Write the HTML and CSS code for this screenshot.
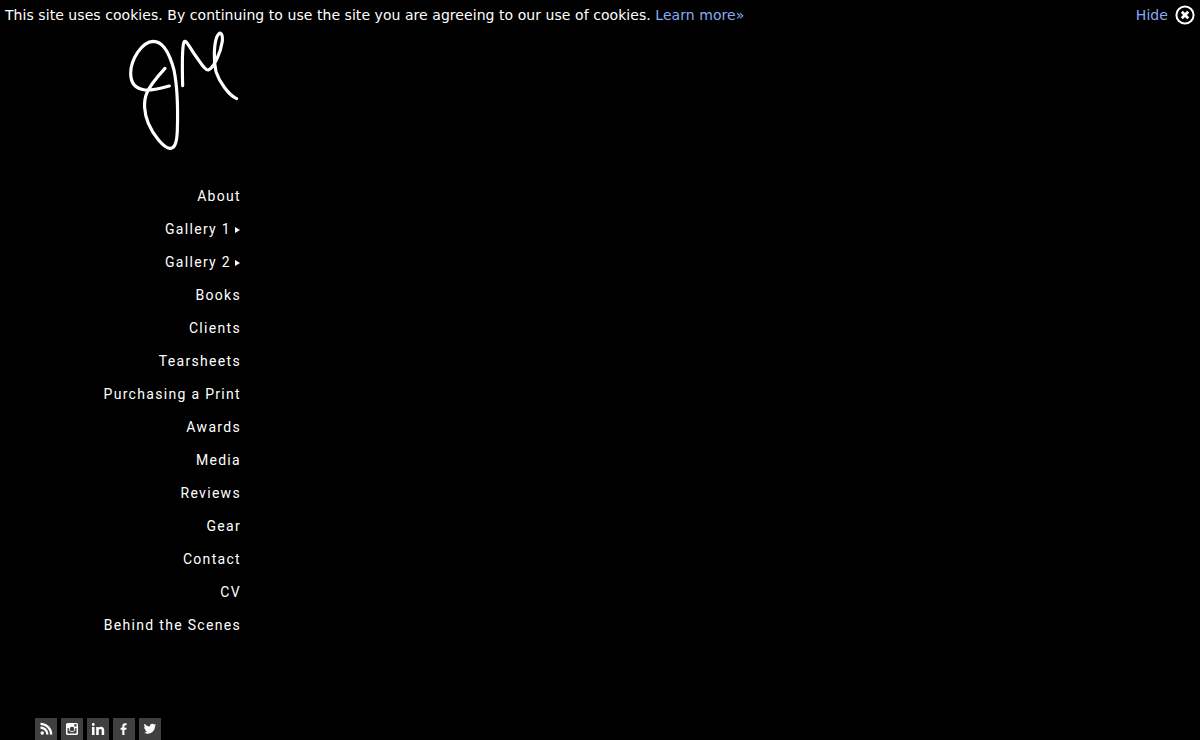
FILE: index.html
```html
<!DOCTYPE html>
<html>
<head>
<meta charset="UTF-8">
<title>Portfolio</title>
<link rel="stylesheet" href="styles.css">
</head>
<body>

<div class="cookieBar">
	<span>This site uses cookies. By continuing to use the site you are agreeing to our use of cookies. <a href="#">Learn more»</a></span>
	<span class="cookieHide">
		<a href="#">Hide</a>
		<svg class="closeIcon" viewBox="0 0 20 20">
			<circle cx="10" cy="10" r="8.6" fill="none" stroke="#fff" stroke-width="2"/>
			<path d="M6.8 6.8L13.2 13.2M13.2 6.8L6.8 13.2" stroke="#fff" stroke-width="2.8"/>
		</svg>
	</span>
</div>

<div class="side">
	<svg class="logo" viewBox="0 0 480 420">
		<path d="M208 198C185 204 160 212 135 210C108 207 92 190 92 160C92 120 125 65 160 64C190 64 210 105 222 150C232 200 234 270 232 330C231 365 225 386 210 385C190 384 160 345 145 310C132 280 130 245 140 220C150 195 172 170 195 145" />
		<path d="M248 197C247 160 245 85 252 66C258 56 270 85 285 105C300 125 315 152 325 150C340 145 362 100 367 64C369 36 358 32 350 52C342 75 340 120 348 155C358 185 385 225 410 236" />
	</svg>

	<ul class="menu">
		<li><a href="#">About</a></li>
		<li><a href="#">Gallery 1<span class="arrow"></span></a></li>
		<li><a href="#">Gallery 2<span class="arrow"></span></a></li>
		<li><a href="#">Books</a></li>
		<li><a href="#">Clients</a></li>
		<li><a href="#">Tearsheets</a></li>
		<li><a href="#">Purchasing a Print</a></li>
		<li><a href="#">Awards</a></li>
		<li><a href="#">Media</a></li>
		<li><a href="#">Reviews</a></li>
		<li><a href="#">Gear</a></li>
		<li><a href="#">Contact</a></li>
		<li><a href="#">CV</a></li>
		<li><a href="#">Behind the Scenes</a></li>
	</ul>

	<div class="social">
		<a href="#"><svg viewBox="0 0 22 22"><circle cx="7.2" cy="15" r="1.7" fill="#fff"/><path d="M5.5 9.6A7 7 0 0 1 12.4 16.5M5.5 5.8A10.8 10.8 0 0 1 16.2 16.5" fill="none" stroke="#fff" stroke-width="2.3"/></svg></a>
		<a href="#"><svg viewBox="0 0 22 22"><path fill-rule="evenodd" fill="#fff" d="M6.5 5H15.500A1.500 1.500 0 0 1 17 6.500V15.500A1.500 1.500 0 0 1 15.500 17H6.500A1.500 1.500 0 0 1 5 15.500V6.500A1.500 1.500 0 0 1 6.500 5ZM6.500 10V15.500H15.500V10H14.200A3.300 3.300 0 1 1 7.800 10ZM11 8.700A2.300 2.300 0 1 0 11 13.300A2.300 2.300 0 1 0 11 8.700ZM13.300 6.300V8.500H15.600V6.300Z"/></svg></a>
		<a href="#"><svg viewBox="0 0 22 22"><path fill="#fff" d="M5 9H7.500V17H5ZM6.250 5A1.450 1.450 0 1 1 6.250 7.900A1.450 1.450 0 1 1 6.250 5ZM9.200 9H11.600V10.100C12.100 9.300 13 8.800 14.100 8.800C16.200 8.800 17.200 10 17.200 12.300V17H14.700V12.800C14.700 11.600 14.300 11 13.300 11C12.300 11 11.700 11.700 11.700 12.900V17H9.200Z"/></svg></a>
		<a href="#"><svg viewBox="0 0 22 22"><path fill="#fff" d="M9.300 17V11.800H7.600V9.700H9.300V8.200C9.300 6.300 10.400 5.300 12 5.300C12.700 5.300 13.300 5.400 13.600 5.400V7.300H12.500C11.600 7.300 11.400 7.700 11.400 8.400V9.700H13.600L13.300 11.800H11.400V17Z"/></svg></a>
		<a href="#"><svg viewBox="0 0 22 22"><path fill="#fff" transform="translate(1.200 1) scale(0.9)" d="M18 6.700C17.500 6.900 16.900 7.100 16.300 7.200C16.900 6.800 17.400 6.200 17.600 5.500C17 5.800 16.400 6.100 15.700 6.200C15.100 5.600 14.300 5.200 13.500 5.200C11.800 5.200 10.500 6.700 10.900 8.400C8.400 8.300 6.200 7.100 4.800 5.300C4 6.600 4.400 8.400 5.700 9.300C5.200 9.300 4.700 9.100 4.300 8.900C4.300 10.300 5.200 11.500 6.600 11.800C6.200 11.900 5.700 11.900 5.300 11.900C5.700 13 6.700 13.900 8 13.900C6.800 14.900 5.300 15.300 3.800 15.100C5.100 15.900 6.500 16.400 8.100 16.400C13.500 16.400 16.600 11.900 16.400 7.900C17 7.600 17.500 7.200 18 6.700Z"/></svg></a>
	</div>
</div>

</body>
</html>
```

FILE: styles.css
```css
html, body {height: 100%;}
body {margin: 0; background-color: #000; color: #fff; overflow: hidden;}
a {color: inherit; text-decoration: none;}

.cookieBar {display: flex; justify-content: space-between; align-items: center; height: 30px; padding: 0 5px; font-family: "DejaVu Sans", Verdana, sans-serif; font-size: 14px; letter-spacing: 0.056px;}
.cookieBar a {color: #8aaaf5;}
.cookieHide {display: flex; align-items: center; gap: 7px;}
.closeIcon {width: 20px; height: 20px;}

.side {width: 241px; display: flex; flex-direction: column; align-items: flex-end;}
.logo {display: block; width: 160px; height: 140px; margin: -10px -19px 0 0; flex: none;}
.logo path {fill: none; stroke: #fff; stroke-width: 9.5; stroke-linecap: round; stroke-linejoin: round;}

.menu {list-style: none; margin: 20px 0 0; padding: 0; text-align: right; font-family: Roboto, sans-serif; font-size: 14px; letter-spacing: 1.31px;}
.menu li {height: 33px; line-height: 33px; white-space: nowrap;}
.arrow {display: inline-block; margin: 0 1px 0 4px; border-left: 5px solid #fff; border-top: 3px solid transparent; border-bottom: 3px solid transparent; vertical-align: 1px;}

.social {display: flex; gap: 4px; align-self: flex-start; margin: 76px 0 0 35px;}
.social a {display: block; width: 22px; height: 22px; background-color: #404040;}
.social svg {display: block; width: 22px; height: 22px;}
```
